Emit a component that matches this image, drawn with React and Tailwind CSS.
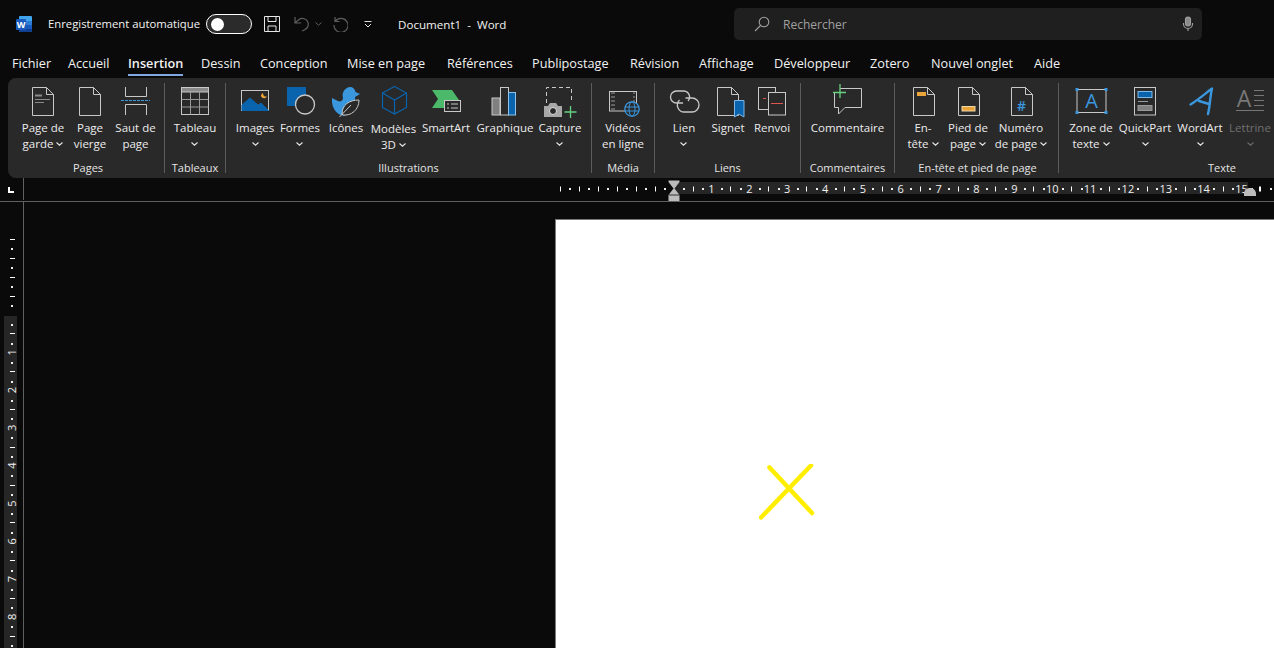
import React from "react";

const G = "#c8c8c8", B = "#0a64ad", L = "#3a96dd", O = "#eaa43a", GR = "#4cb86a", P = "#66d17f", R = "#e0564e";

function Ico({ x, children }) {
  return (
    <svg className="w-10 h-9 shrink-0 overflow-visible" viewBox={`${x} 84 40 36`} fill="none" stroke={G} strokeWidth="1">
      {children}
    </svg>
  );
}
function Doc({ l, w = 21 }) {
  const r = l + w;
  return <path d={`M${l} 87.5H${r - 7}L${r} 94.5V115.5H${l}ZM${r - 7} 87.5V94.5H${r}`} fill="#2a2a2a" />;
}
function Chev({ dim }) {
  return (
    <svg className="inline-block w-[7px] h-[4px]" viewBox="0 0 7 4" fill="none" stroke={dim ? "#6a6a6a" : "#e4e4e4"} strokeWidth="1.1">
      <path d="M.5 .5L3.5 3.2L6.5 .5" />
    </svg>
  );
}

function Btn({ w, icon, lines, chevBelow, chevInline, dim, low }) {
  const col = dim ? "text-[#6f6f6f]" : "text-[#ececec]";
  return (
    <div className={`${w} shrink-0 flex flex-col items-center ${col}`}>
      {icon}
      <div className={`flex flex-col items-center text-[11.5px] leading-4 whitespace-nowrap ${low ? "mt-px" : ""}`}>
        {lines.map((t, i) => (
          <div key={i} className="flex items-center gap-[3px]">
            <span>{t}</span>
            {chevInline && i === lines.length - 1 && <Chev />}
          </div>
        ))}
        {chevBelow && (
          <div className="h-4 flex items-center">
            <Chev dim={dim} />
          </div>
        )}
      </div>
    </div>
  );
}

function Group({ w, pl, label, lpl, children }) {
  return (
    <div className={`${w} shrink-0 h-full flex flex-col`}>
      <div className={`flex-1 pt-[6px] flex ${pl}`}>{children}</div>
      <div className={`h-4 mb-[2px] text-center text-[11px] leading-4 text-[#e4e4e4] whitespace-nowrap ${lpl || ""}`}>{label}</div>
    </div>
  );
}
const Sep = () => <div className="w-px shrink-0 my-[5px] bg-[#5c5c5c]" />;

const tabs = [
  ["Fichier", "w-[56px]"], ["Accueil", "w-[60px]"], ["Insertion", "w-[73px]"], ["Dessin", "w-[59px]"],
  ["Conception", "w-[87px]"], ["Mise en page", "w-[100px]"], ["Références", "w-[85px]"], ["Publipostage", "w-[98px]"],
  ["Révision", "w-[69px]"], ["Affichage", "w-[75px]"], ["Développeur", "w-[96px]"], ["Zotero", "w-[61px]"],
  ["Nouvel onglet", "w-[103px]"], ["Aide", "w-[60px]"],
];

function HRuler() {
  const u = 37.86, z = 673.6;
  const items = [];
  for (let i = -3; i <= 16; i++) {
    const a = z + i * u;
    [0.25, 0.5, 0.75].forEach((f) => {
      const x = a + f * u;
      if (x < 556 || x > 1274) return;
      if (f === 0.5) items.push(<rect key={`${i}-${f}`} x={Math.round(x)} y="186.5" width="1" height="5" fill="#fff" />);
      else items.push(<rect key={`${i}-${f}`} x={Math.round(x)} y="188" width="2" height="2" fill="#eee" />);
    });
    if (i > 0 && i <= 15)
      items.push(<text key={`n${i}`} x={a} y="193" fontSize="11" fill="#f0f0f0" textAnchor="middle" fontFamily="'Open Sans', sans-serif">{i}</text>);
    if (i < 0 && a > 556) items.push(<rect key={`t${i}`} x={Math.round(a)} y="186.5" width="1" height="5" fill="#fff" />);
  }
  items.push(<rect key="e16" x="1259" y="186.5" width="1" height="5" fill="#fff" />);
  return (
    <svg className="flex-1 h-full" viewBox="24 178 1250 23">
      <rect x="674" y="182" width="574" height="12" fill="#262626" />
      {items}
      <path d="M668.5 180.5H679.5V182L674.5 188.5L679.5 195V201H668.5V195L673.5 188.5L668.5 182Z" fill="#bcbcbc" />
      <path d="M669 195H680" stroke="#333" strokeWidth="1" />
      <path d="M1244 196V194C1244 190 1247 188 1250 188C1253 188 1256 190 1256 194V196Z" fill="#bcbcbc" />
    </svg>
  );
}

function VRuler() {
  const u = 37.8, z = 314.5;
  const items = [];
  for (let i = -3; i <= 8; i++) {
    const a = z + i * u;
    [0.25, 0.5, 0.75].forEach((f) => {
      const y = a + f * u;
      if (y < 236 || y > 648) return;
      if (f === 0.5) items.push(<rect key={`${i}-${f}`} x="10" y={Math.round(y)} width="5" height="1" fill="#fff" />);
      else items.push(<rect key={`${i}-${f}`} x="11" y={Math.round(y)} width="2" height="2" fill="#eee" />);
    });
    if (i > 0)
      items.push(<text key={`n${i}`} x="0" y="0" transform={`translate(16 ${a}) rotate(-90)`} fontSize="11" fill="#f0f0f0" textAnchor="middle" fontFamily="'Open Sans', sans-serif">{i}</text>);
    if (i < 0 && a > 236) items.push(<rect key={`t${i}`} x="10" y={Math.round(a)} width="5" height="1" fill="#fff" />);
  }
  return (
    <svg className="w-[23px] h-[446px] shrink-0" viewBox="0 202 23 446">
      <rect x="4" y="316" width="13" height="332" fill="#262626" />
      {items}
    </svg>
  );
}

export default function App() {
  return (
    <div className="w-[1274px] h-[648px] overflow-hidden bg-[#0a0a0a] flex flex-col text-white font-['Open_Sans',sans-serif]">
      {/* Title bar */}
      <div className="h-12 shrink-0 flex items-center">
        <svg className="w-4 h-4 ml-4 shrink-0" viewBox="0 0 16 16">
          <rect x="3" y="0" width="13" height="16" rx="1" fill="#41a5ee" />
          <rect x="3" y="5" width="13" height="4" fill="#2b7cd3" />
          <rect x="3" y="9" width="13" height="4" fill="#185abd" />
          <path d="M3 13H16V15A1 1 0 0 1 15 16H4A1 1 0 0 1 3 15Z" fill="#103f91" />
          <rect x="0" y="3" width="10" height="11" rx="1" fill="#185abd" />
          <text x="5" y="12" fontSize="9" fontWeight="700" fill="#fff" textAnchor="middle" fontFamily="'Open Sans', sans-serif">W</text>
        </svg>
        <span className="ml-4 pt-px w-[158px] text-[11.3px] text-[#f2f2f2] whitespace-nowrap">Enregistrement automatique</span>
        <div className="w-[46px] h-[20px] rounded-full border border-white bg-[#2b2b2b] flex items-center pl-[4px] shrink-0">
          <div className="w-[13px] h-[13px] rounded-full bg-white" />
        </div>
        <svg className="w-4 h-4 ml-3 shrink-0" viewBox="0 0 16 16" fill="none" stroke="#e8e8e8" strokeWidth="1">
          <path d="M.5 .5H15.5V15.5H.5ZM4 .5V5.5H12V.5M4 15.5V10H12V15.5" />
        </svg>
        <svg className="w-4 h-4 ml-[14px] shrink-0" viewBox="0 0 16 16" fill="none" stroke="#5e5e5e" strokeWidth="1.2">
          <path d="M1 1V7H7M1.5 6.5L5 3.5C8 1.5 13 2.5 14 6.5C15 10.5 12.5 13.5 8 15" />
        </svg>
        <svg className="w-[7px] h-[4px] ml-[5px] shrink-0" viewBox="0 0 7 4" fill="none" stroke="#5e5e5e"><path d="M.5 .5L3.5 3.2L6.5 .5" /></svg>
        <svg className="w-4 h-4 ml-[10px] shrink-0" viewBox="0 0 16 16" fill="none" stroke="#5e5e5e" strokeWidth="1.2">
          <path d="M3 1V5.5H7.5M3.3 5.3A7 7 0 1 1 2 9" />
        </svg>
        <svg className="w-[8px] h-[7px] ml-4 shrink-0" viewBox="0 0 8 7" fill="none" stroke="#e0e0e0"><path d="M.5 .5H7.5M1 3L4 6L7 3" /></svg>
        <span className="ml-[26px] pt-px w-[336px] shrink-0 text-[11.6px] text-[#f2f2f2] whitespace-pre">Document1  -  Word</span>
        <div className="w-[468px] h-8 rounded-[5px] bg-[#1f1f1f] flex items-center shrink-0">
          <svg className="w-4 h-4 ml-[20px] shrink-0" viewBox="0 0 16 16" fill="none" stroke="#a0a0a0" strokeWidth="1.1">
            <circle cx="10" cy="6" r="4.8" />
            <path d="M6.5 9.5L1 15" />
          </svg>
          <span className="ml-[13px] pt-px text-[12px] text-[#a0a0a0]">Rechercher</span>
          <svg className="w-[12px] h-4 ml-auto mr-2 shrink-0" viewBox="0 0 12 16" fill="none" stroke="#a0a0a0" strokeWidth="1.1">
            <rect x="3.5" y="1" width="5" height="9" rx="2.5" fill="#8a8a8a" />
            <path d="M1.5 7V8A4.5 4.5 0 0 0 10.5 8V7M6 12.5V15" />
          </svg>
        </div>
      </div>

      {/* Tabs */}
      <div className="h-[30px] shrink-0 flex pl-3 items-start">
        {tabs.map(([t, w]) => (
          <div key={t} className={`${w} h-[27px] shrink-0 relative text-[12.7px] leading-[30px] whitespace-nowrap ${t === "Insertion" ? "font-semibold" : ""} text-[#f2f2f2]`}>
            {t}
            {t === "Insertion" && <div className="absolute left-0 top-[26px] w-[55px] h-[2px] bg-[#7fa8e3]" />}
          </div>
        ))}
      </div>

      {/* Ribbon */}
      <div className="h-[100px] shrink-0 ml-2 rounded-l-lg bg-[#292929] flex overflow-hidden">
        <Group w="w-[156px]" pl="pl-[11px]" lpl="pl-1" label="Pages">
          <Btn w="w-12" chevInline lines={["Page de", "garde"]} icon={<Ico x={23}><Doc l={32.5} /><path d="M35 95.5H42" stroke="#8a8a8a" strokeWidth="2" /><path d="M35 99.5H50M35 102.5H44" stroke="#8a8a8a" /></Ico>} />
          <Btn w="w-[46px]" lines={["Page", "vierge"]} icon={<Ico x={70}><Doc l={79.5} /></Ico>} />
          <Btn w="w-[45px]" lines={["Saut de", "page"]} icon={<Ico x={115}><path d="M124.5 87V96.5H145.5V87M124.5 115V104.5H145.5V115" /><path d="M120 100.5H149" stroke={L} strokeDasharray="3 1" /></Ico>} />
        </Group>
        <Sep />
        <Group w="w-[60px]" label="Tableaux">
          <Btn w="w-[60px]" chevBelow lines={["Tableau"]} icon={<Ico x={175}><rect x="181.5" y="87.5" width="27" height="27" /><rect x="181.5" y="87.5" width="27" height="4.5" fill="#8a8a8a" /><path d="M190.5 92V114.5M199.5 92V114.5M181.5 99.5H208.5M181.5 107H208.5" stroke="#9a9a9a" /></Ico>} />
        </Group>
        <Sep />
        <Group w="w-[365px]" pl="pl-[7px]" label="Illustrations">
          <Btn w="w-[44px]" chevBelow lines={["Images"]} icon={<Ico x={235}><rect x="241.5" y="90.5" width="27" height="20" /><path d="M242 110.5V105L250 98L258 105L261 103L268.5 110.5Z" fill={B} stroke={B} /><path d="M263 93C263 96 265 97 267 96.5C265.5 99.5 261 98.5 261 95.5C261 94.5 262 93.5 263 93Z" fill={O} stroke="none" /></Ico>} />
          <Btn w="w-[46px]" chevBelow lines={["Formes"]} icon={<Ico x={280}><rect x="287" y="87" width="19" height="19" fill={B} stroke="none" /><circle cx="305" cy="104.5" r="9.5" fill="#292929" strokeWidth="1.3" /></Ico>} />
          <Btn w="w-[46px]" lines={["Icônes"]} icon={<Ico x={326}><path d="M332 98L338 101C340 102 343 101 343 98C341 92 346 87 350 87C353 87 355 89 355.5 92L360 94L355 97C356 102 352 108 350 112L344 116C337 115 331 108 332 98Z" fill={L} stroke="none" /><path d="M342 114C342 105 349 100 359 100C359 110 351 116 343 115Z" fill="#292929" /><path d="M339.5 117L351 105" /></Ico>} />
          <Btn w="w-[49px]" low chevInline lines={["Modèles", "3D"]} icon={<Ico x={373}><path d="M393.5 86.5L405.5 93V107.5L393.5 114L381.5 107.5V93ZM381.5 93L393.5 100L405.5 93M393.5 100V114" stroke={B} strokeWidth="1.2" /></Ico>} />
          <Btn w="w-14" lines={["SmartArt"]} icon={<Ico x={426}><path d="M432 90H452L459 100H444V108H432L438 99Z" fill={GR} stroke="none" /><rect x="444.5" y="100.5" width="16" height="11" fill="#292929" /><path d="M447 104H449M451 104H458M447 108H449M451 108H458" /></Ico>} />
          <Btn w="w-[62px]" lines={["Graphique"]} icon={<Ico x={485}><rect x="492" y="98" width="8" height="17" fill="#808080" stroke={G} /><rect x="500.5" y="87.5" width="8" height="27.5" /><rect x="508.5" y="92.5" width="7" height="22.5" fill={B} stroke="#8fc3ea" /></Ico>} />
          <Btn w="w-12" chevBelow lines={["Capture"]} icon={<Ico x={540}><path d="M546.5 103V87.5H571.5V103" strokeDasharray="4 3" /><path d="M544 106H548L550 103H556L558 106H562V117H544Z" fill="#a8a8a8" stroke="none" /><circle cx="553" cy="111" r="3.5" fill="#292929" stroke="#e0e0e0" /><path d="M570.5 106V118M564.5 112H576.5" stroke={P} strokeWidth="1.3" /></Ico>} />
        </Group>
        <Sep />
        <Group w="w-[62px]" label="Média">
          <Btn w="w-[62px]" lines={["Vidéos", "en ligne"]} icon={<Ico x={603}><rect x="609.5" y="91.5" width="27" height="19.5" /><path d="M612 92V111M634 92V105M614 92V111" stroke="#9a9a9a" strokeDasharray="2 2" /><circle cx="632" cy="109" r="7.2" fill="#292929" stroke={L} strokeWidth="1.3" /><ellipse cx="632" cy="109" rx="3" ry="7.2" stroke={L} /><path d="M625 107H639M625 111H639" stroke={L} /></Ico>} />
        </Group>
        <Sep />
        <Group w="w-[145px]" pl="pl-[7px]" label="Liens">
          <Btn w="w-11" chevBelow lines={["Lien"]} icon={<Ico x={664}><path d="M683 103H676.5A6 6 0 0 1 676.5 91H684A6 6 0 0 1 688 101M685.5 98H692A7 7 0 0 1 692 112H684.5A7 7 0 0 1 679.5 100" strokeWidth="1.3" /></Ico>} />
          <Btn w="w-11" lines={["Signet"]} icon={<Ico x={708}><Doc l={717.5} /><path d="M734.5 100.5H744V117L739 114L734.5 117Z" fill={B} stroke="#7fb8e6" /></Ico>} />
          <Btn w="w-11" lines={["Renvoi"]} icon={<Ico x={752}><rect x="758.5" y="87.5" width="17" height="22" /><rect x="768.5" y="92.5" width="17" height="22.5" fill="#292929" /><path d="M763 98.5H766M771 103.5H783" stroke={R} /></Ico>} />
        </Group>
        <Sep />
        <Group w="w-[93px]" label="Commentaires">
          <Btn w="w-[93px]" lines={["Commentaire"]} icon={<Ico x={828}><path d="M834.5 92V107.5H838.5V114L845 107.5H861.5V88.5H840" /><path d="M840 84V98M833 92.5H846" stroke={P} strokeWidth="1.3" /></Ico>} />
        </Group>
        <Sep />
        <Group w="w-[163px]" pl="pl-1" lpl="pl-[2px]" label="En-tête et pied de page">
          <Btn w="w-12" chevInline lines={["En-", "tête"]} icon={<Ico x={903}><Doc l={913.5} /><rect x="917" y="92" width="9" height="4" fill={O} stroke="none" /></Ico>} />
          <Btn w="w-[42px]" chevInline lines={["Pied de", "page"]} icon={<Ico x={948}><Doc l={958.5} /><rect x="962" y="106.5" width="13" height="4.5" fill={O} stroke="#f0d9a8" /></Ico>} />
          <Btn w="w-16" chevInline lines={["Numéro", "de page"]} icon={<Ico x={1001}><Doc l={1011.5} /><text x="1021.5" y="111" fontSize="14" fontWeight="600" fill={L} stroke="none" textAnchor="middle" fontFamily="'Open Sans', sans-serif">#</text></Ico>} />
        </Group>
        <Sep />
        <Group w="w-[326px]" pl="pl-1" label="Texte">
          <Btn w="w-14" chevInline lines={["Zone de", "texte"]} icon={<Ico x={1071}><rect x="1077" y="89.5" width="29" height="23" /><rect x="1075.5" y="88" width="3" height="3" fill={L} stroke="none" /><rect x="1104.5" y="88" width="3" height="3" fill={L} stroke="none" /><rect x="1075.5" y="111" width="3" height="3" fill={L} stroke="none" /><rect x="1104.5" y="111" width="3" height="3" fill={L} stroke="none" /><text x="1091.5" y="108" fontSize="20" fill={L} stroke="none" textAnchor="middle" fontFamily="'Open Sans', sans-serif">A</text></Ico>} />
          <Btn w="w-[52px]" chevBelow lines={["QuickPart"]} icon={<Ico x={1125}><rect x="1134.5" y="87.5" width="21" height="27.5" /><rect x="1138" y="91.5" width="14" height="6" fill={B} stroke="#7fb8e6" /><path d="M1138 101.5H1148" stroke="#9a9a9a" /><rect x="1138" y="105.5" width="14" height="5" fill="#808080" stroke="#9a9a9a" /></Ico>} />
          <Btn w="w-[58px]" chevBelow lines={["WordArt"]} icon={<Ico x={1180}><path d="M1190.5 104.5C1198 100 1206 93 1212 88.5C1210 97 1210 106 1208 114M1199 101L1209 104" stroke={L} strokeWidth="2.4" strokeLinecap="round" strokeLinejoin="round" /></Ico>} />
          <Btn w="w-[42px]" dim chevBelow lines={["Lettrine"]} icon={<Ico x={1230}><text x="1244" y="107" fontSize="23" fill="#777" stroke="none" textAnchor="middle" fontFamily="'Open Sans', sans-serif">A</text><path d="M1254 90.5H1264M1254 95.5H1264M1254 100.5H1264M1254 105.5H1264M1236 110.5H1264" stroke="#777" /></Ico>} />
        </Group>
      </div>

      {/* Horizontal ruler */}
      <div className="h-6 shrink-0 flex border-b border-[#606060]">
        <div className="w-6 shrink-0 border-r border-[#606060] mb-[1px] relative flex">
          <div className="ml-2 mt-[9px] w-[6px] h-[6px] border-l-2 border-b-2 border-white" />
        </div>
        <HRuler />
      </div>

      {/* Body */}
      <div className="flex-1 flex min-h-0">
        <div className="w-6 shrink-0 border-r border-[#606060] overflow-hidden">
          <VRuler />
        </div>
        <div className="flex-1 pl-[531px] pt-[17px] flex">
          <div className="flex-1 relative bg-white border-l border-t border-[#7a7a7a]">
            <svg className="absolute left-[203px] top-[244px] w-[60px] h-[60px]" viewBox="760 464 60 60" fill="none" stroke="#ffee00" strokeWidth="4.5" strokeLinecap="round">
              <path d="M770.5 467.5L813 513M812 465.5L762 517.5" />
            </svg>
          </div>
        </div>
      </div>
    </div>
  );
}
